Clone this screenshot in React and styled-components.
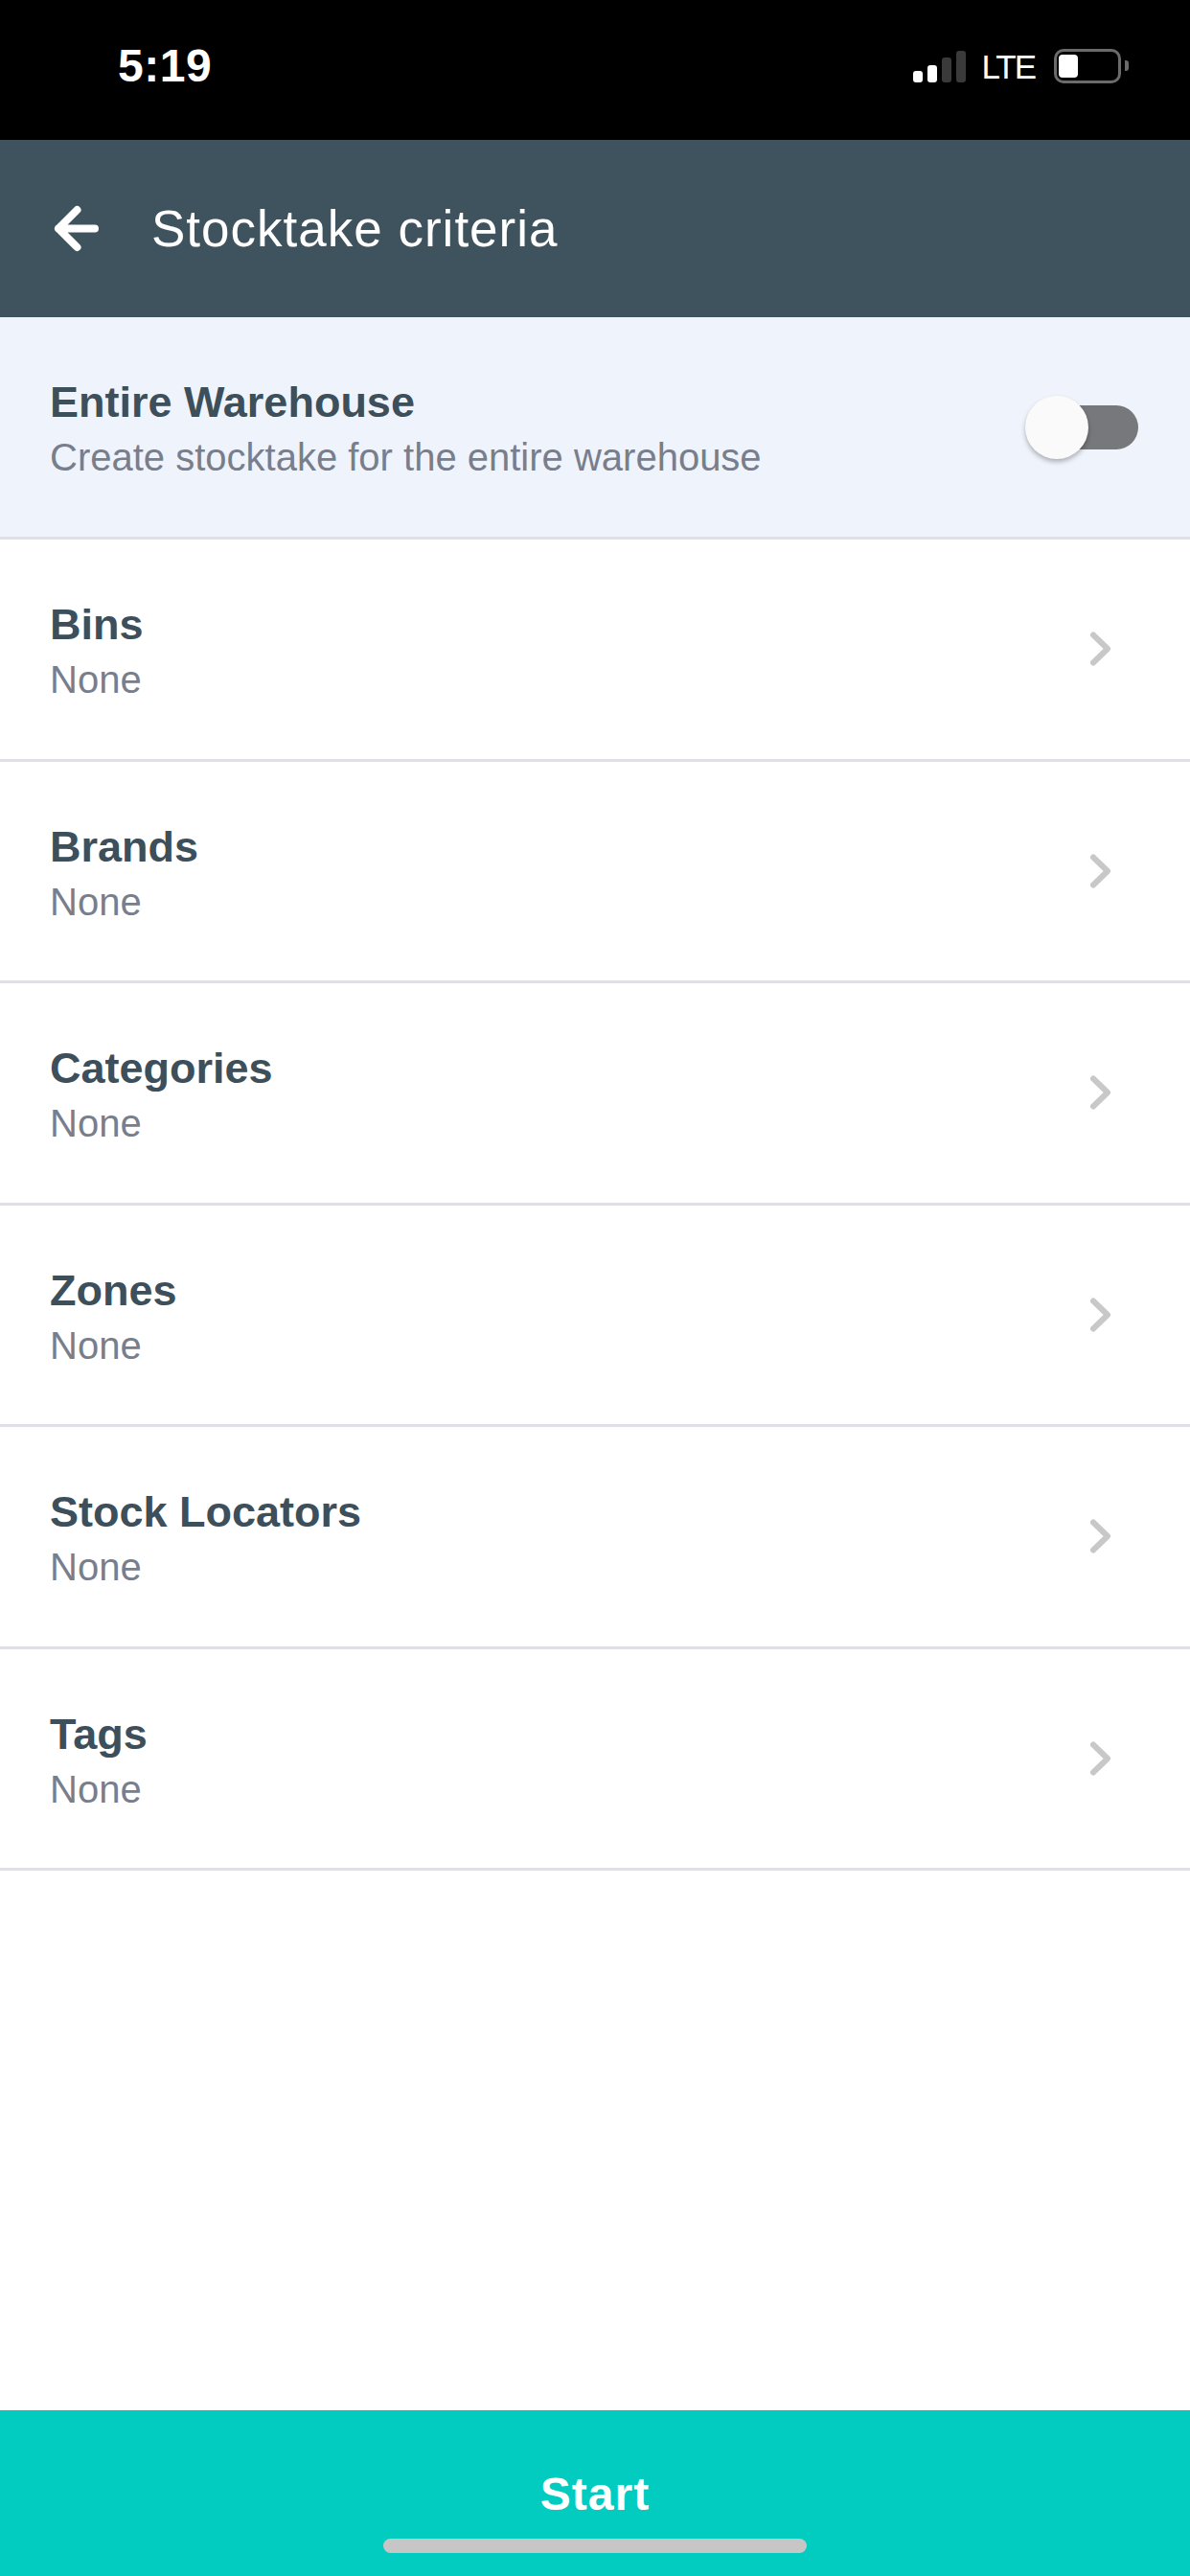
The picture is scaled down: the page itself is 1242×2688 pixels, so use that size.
import React from 'react'
import styled, { createGlobalStyle } from 'styled-components'

const GlobalStyle = createGlobalStyle`
  html, body {
    margin: 0;
    padding: 0;
    background: #ffffff;
  }
  body {
    font-family: "Liberation Sans", Arial, sans-serif;
    -webkit-font-smoothing: antialiased;
  }
  * {
    box-sizing: border-box;
  }
`

const Screen = styled.div`
  display: flex;
  flex-direction: column;
  width: 1242px;
  min-height: 2688px;
  background: #ffffff;
`

const StatusBar = styled.div`
  height: 146px;
  background: #000000;
  display: flex;
  align-items: center;
  justify-content: space-between;
  padding: 0 64px 9px 123px;
  color: #ffffff;
`

const Clock = styled.span`
  font-size: 48px;
  font-weight: 600;
  letter-spacing: 0.5px;
`

const StatusIcons = styled.div`
  display: flex;
  align-items: center;
`

const Signal = styled.div`
  display: flex;
  align-items: flex-end;
  gap: 5px;
  height: 34px;
  margin-top: 1px;
`

const SignalBar = styled.span`
  width: 10px;
  height: ${p => p.h}px;
  border-radius: 3px;
  background: ${p => (p.on ? '#ffffff' : '#3a3a3a')};
`

const Network = styled.span`
  font-size: 35px;
  font-weight: 500;
  letter-spacing: -2px;
  margin: 0 20px 0 16px;
  padding-top: 3px;
`

const Battery = styled.div`
  width: 70px;
  height: 36px;
  border: 3px solid #6b6b6b;
  border-radius: 10px;
  padding: 3px 2px;
  display: flex;
`

const BatteryLevel = styled.span`
  width: 20px;
  height: 24px;
  border-radius: 4px;
  background: #ffffff;
`

const BatteryCap = styled.span`
  width: 4px;
  height: 11px;
  margin-left: 4px;
  border-radius: 0 3px 3px 0;
  background: #6b6b6b;
`

const Header = styled.header`
  height: 185px;
  background: #3f535e;
  display: flex;
  align-items: center;
  padding-left: 53px;
  gap: 51px;
`

const Title = styled.h1`
  margin: 0;
  color: #ffffff;
  font-size: 53px;
  font-weight: 400;
  letter-spacing: 1px;
`

const List = styled.div`
  flex: 1;
  display: flex;
  flex-direction: column;
`

const Row = styled.div`
  height: ${p => p.h}px;
  display: flex;
  align-items: flex-start;
  justify-content: space-between;
  padding: 60px ${p => p.pr}px 0 52px;
  background: ${p => (p.highlight ? '#eff4fc' : '#ffffff')};
  border-bottom: 3px solid #dfe0e6;
`

const RowText = styled.div`
  display: flex;
  flex-direction: column;
`

const RowTitle = styled.span`
  color: #3c4f5a;
  font-size: 45px;
  font-weight: 700;
  line-height: 58px;
`

const RowSub = styled.span`
  color: #787e8c;
  font-size: 40px;
  line-height: 52px;
  margin-top: 2px;
`

const RowSide = styled.div`
  align-self: stretch;
  display: flex;
  align-items: center;
  margin-top: -60px;
`

const Switch = styled.div`
  position: relative;
  width: 118px;
  height: 66px;
  display: flex;
  align-items: center;
  justify-content: flex-end;
`

const Track = styled.span`
  width: 90px;
  height: 46px;
  border-radius: 23px;
  background: #77787c;
`

const Knob = styled.span`
  position: absolute;
  left: 0;
  top: 0;
  width: 66px;
  height: 66px;
  border-radius: 50%;
  background: #fafafa;
  box-shadow: 0 3px 5px rgba(0, 0, 0, 0.28);
`

const Footer = styled.div`
  position: relative;
  height: 173px;
  background: #02cbc0;
  display: flex;
  align-items: center;
  justify-content: center;
`

const StartButton = styled.button`
  border: 0;
  background: transparent;
  color: #ffffff;
  font-family: "Liberation Sans", Arial, sans-serif;
  font-size: 48px;
  font-weight: 700;
  letter-spacing: 1px;
  padding: 0;
  margin-top: 2px;
`

const HomeIndicator = styled.span`
  position: absolute;
  left: 400px;
  bottom: 24px;
  width: 442px;
  height: 15px;
  border-radius: 8px;
  background: #c6c6c6;
`

const BackArrow = () => (
  <svg width="54" height="54" viewBox="0 0 54 54" fill="none">
    <path
      d="M8 26.5 H46 M27.5 7 L8 26.5 L27.5 46"
      stroke="#ffffff"
      strokeWidth="8"
      strokeLinecap="round"
      strokeLinejoin="round"
    />
  </svg>
)

const Chevron = () => (
  <svg width="28" height="44" viewBox="0 0 28 44" fill="none">
    <path
      d="M7 7.5 L22 22 L7 36.5"
      stroke="#c8c8c8"
      strokeWidth="6"
      strokeLinecap="round"
      strokeLinejoin="round"
    />
  </svg>
)

const criteria = ['Bins', 'Brands', 'Categories', 'Zones', 'Stock Locators', 'Tags']

export default function App() {
  return (
    <Screen>
      <GlobalStyle />
      <StatusBar>
        <Clock>5:19</Clock>
        <StatusIcons>
          <Signal>
            <SignalBar h={12} on />
            <SignalBar h={18} on />
            <SignalBar h={26} />
            <SignalBar h={33} />
          </Signal>
          <Network>LTE</Network>
          <Battery>
            <BatteryLevel />
          </Battery>
          <BatteryCap />
        </StatusIcons>
      </StatusBar>

      <Header>
        <BackArrow />
        <Title>Stocktake criteria</Title>
      </Header>

      <List>
        <Row highlight h={232} pr={54}>
          <RowText>
            <RowTitle>Entire Warehouse</RowTitle>
            <RowSub>Create stocktake for the entire warehouse</RowSub>
          </RowText>
          <RowSide>
            <Switch>
              <Track />
              <Knob />
            </Switch>
          </RowSide>
        </Row>
        {criteria.map(name => (
          <Row key={name} h={231.5} pr={80}>
            <RowText>
              <RowTitle>{name}</RowTitle>
              <RowSub>None</RowSub>
            </RowText>
            <RowSide>
              <Chevron />
            </RowSide>
          </Row>
        ))}
      </List>

      <Footer>
        <StartButton>Start</StartButton>
        <HomeIndicator />
      </Footer>
    </Screen>
  )
}
